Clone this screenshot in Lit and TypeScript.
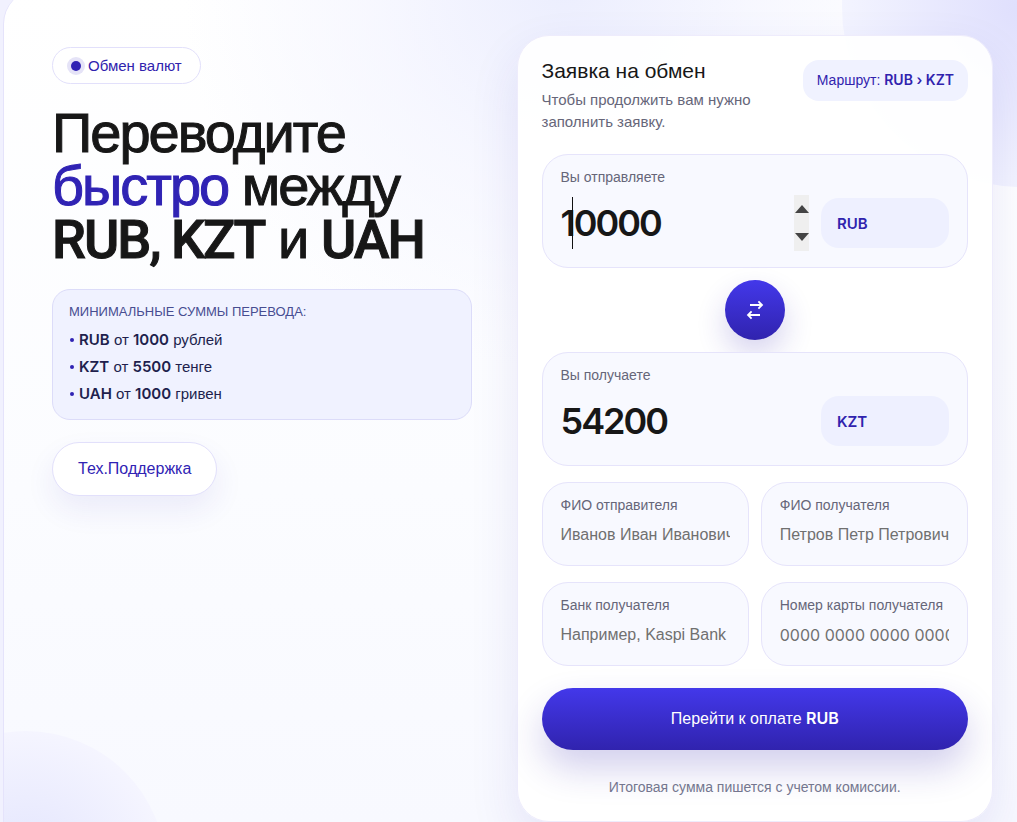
import { LitElement, html, css } from "lit";
import { customElement, state } from "lit/decorators.js";

@customElement("app-root")
export class AppRoot extends LitElement {
  @state() private amount = 10000;
  @state() private from = "RUB";
  @state() private to = "KZT";

  static styles = css`
    :host {
      display: block;
      font-family: "Liberation Sans", Arial, sans-serif;
      color: #171717;
      background: #f1f1fe;
      min-height: 100vh;
      overflow: hidden;
    }
    * { box-sizing: border-box; }
    h1, h2, p, ul { margin: 0; padding: 0; }
    .latin { font-family: Inter, "Liberation Sans", sans-serif; font-weight: 600; line-height: 1; }
    .hero {
      position: relative;
      display: grid;
      grid-template-columns: minmax(0, 1fr) minmax(0, 1fr);
      min-height: calc(100vh + 10px);
      margin: -10px 0 0 3px;
      border-left: 1px solid #e5e3fb;
      border-radius: 34px 0 0 0;
      overflow: hidden;
      background:
        radial-gradient(circle at 560px 0, #eceefe 0, rgba(242, 243, 255, 0.6) 190px, rgba(255, 255, 255, 0) 380px),
        linear-gradient(180deg, #ffffff 0%, #fbfcff 60%, #f8f9ff 100%);
    }
    .orb { position: absolute; border-radius: 50%; }
    .orb.top { width: 360px; height: 360px; left: 838px; top: -163px; background: radial-gradient(circle, #dfdffd 0, #f3f4ff 180px); }
    .orb.bottom { width: 280px; height: 280px; left: -118px; top: 741px; background: radial-gradient(circle, #e2e4fd 0, #f5f5ff 140px); }
    .intro {
      position: relative;
      display: flex;
      flex-direction: column;
      align-items: flex-start;
      padding: 57px 39px 48px 48px;
    }
    .badge {
      display: flex;
      align-items: center;
      gap: 7px;
      height: 37px;
      padding: 0 18px;
      border: 1px solid #e2e0fb;
      border-radius: 19px;
      background: #fff;
      color: #3023ae;
      font-size: 15px;
    }
    .dot { width: 10px; height: 10px; border-radius: 50%; background: #3023b4; box-shadow: 0 0 0 4px #e5e3f7; }
    h1 {
      margin-top: 22px;
      font-size: 56px;
      line-height: 53px;
      font-weight: 400;
      letter-spacing: -2px;
      -webkit-text-stroke: 1px currentColor;
      white-space: nowrap;
    }
    h1 .latin { font-family: Roboto, sans-serif; font-size: 54px; font-weight: 500; line-height: 1; }
    .accent { color: #3023b4; }
    .limits {
      align-self: stretch;
      margin-top: 22px;
      padding: 13px 16px 12px;
      border: 1px solid #dcdcf9;
      border-radius: 18px;
      background: #f0f2ff;
    }
    .limits h2 { font-size: 13px; line-height: 18px; font-weight: 400; color: #474d91; }
    .limits ul { list-style: none; margin-top: 5px; }
    .limits li { display: flex; align-items: center; gap: 5px; font-size: 15px; line-height: 27px; color: #211f4d; white-space: pre; }
    .limits li::before { content: ""; width: 4px; height: 4px; margin-left: 1px; border-radius: 50%; background: #3023b4; }
    .support {
      display: flex;
      align-items: center;
      height: 54px;
      margin-top: 22px;
      padding: 0 25px;
      border: 1px solid #e2e0fb;
      border-radius: 27px;
      background: #fff;
      color: #3023b4;
      font-size: 16px;
      text-decoration: none;
      box-shadow: 0 14px 30px rgba(48, 35, 174, 0.08);
    }
    .side { position: relative; padding: 45px 24px 0 6px; }
    .card {
      padding: 24px;
      border: 1px solid #eeecfc;
      border-radius: 32px;
      background: rgba(255, 255, 255, 0.92);
      box-shadow: 0 20px 50px rgba(48, 35, 174, 0.1);
    }
    .head { display: flex; justify-content: space-between; align-items: flex-start; gap: 24px; }
    .head h2 { font-size: 21px; line-height: 22px; font-weight: 400; }
    .head p { margin-top: 7px; font-size: 15px; line-height: 22px; color: #666679; }
    .route { flex: none; padding: 0 14px; border-radius: 16px; background: #f0f2ff; color: #3023ae; font-size: 14px; line-height: 41px; }
    .field { display: block; border: 1px solid #e6e4fb; border-radius: 26px; background: #f8f9ff; padding: 13px 18px; }
    .field label { display: block; font-size: 14px; line-height: 18px; color: #666679; }
    .money { height: 114px; }
    .first { margin-top: 21px; }
    .row { position: relative; display: flex; align-items: center; gap: 12px; margin-top: 9px; }
    input, select, button { font: inherit; border: 0; outline: 0; background: none; margin: 0; }
    .amount {
      flex: 1;
      min-width: 0;
      height: 56px;
      padding: 0;
      font-family: Inter, sans-serif;
      font-size: 36px;
      font-weight: 600;
      letter-spacing: -2px;
      color: #171717;
      appearance: textfield;
    }
    .amount::-webkit-inner-spin-button { display: none; }
    .stepper { display: grid; width: 15px; height: 56px; background: #efefef; }
    .stepper button { display: grid; place-items: center; padding: 0; }
    .caret { position: absolute; left: 11px; top: 2px; width: 1px; height: 52px; background: #111; }
    .code {
      appearance: none;
      width: 128px;
      height: 50px;
      padding: 0 16px;
      border-radius: 18px;
      background: #eef0ff;
      color: #3023ae;
      font-family: Inter, sans-serif;
      font-size: 15px;
      font-weight: 600;
    }
    .swap {
      display: grid;
      place-items: center;
      width: 60px;
      height: 60px;
      margin: 12px auto;
      padding: 0;
      border-radius: 50%;
      background: linear-gradient(180deg, #4338ea, #3023ae);
      box-shadow: 0 14px 30px rgba(48, 35, 174, 0.2);
    }
    .details { display: grid; grid-template-columns: 1fr 1fr; gap: 16px 12px; margin-top: 16px; }
    .text { height: 84px; }
    .text input { display: block; width: 100%; height: 24px; margin-top: 9px; padding: 0; font-size: 16px; color: #171717; }
    .text input::placeholder { color: #707070; opacity: 1; }
    .text .round { font-family: Inter, sans-serif; }
    .pay {
      display: block;
      width: 100%;
      height: 62px;
      margin-top: 22px;
      border-radius: 31px;
      background: linear-gradient(180deg, #4338ea, #3023ae);
      box-shadow: 0 18px 36px rgba(48, 35, 174, 0.22);
      color: #fff;
      font-size: 16px;
    }
    .note { margin-top: 27px; font-size: 14px; line-height: 20px; text-align: center; color: #74768f; }
  `;

  private swap() {
    [this.from, this.to] = [this.to, this.from];
  }

  private step(by: number) {
    this.amount = Math.max(0, this.amount + by);
  }

  private limit(code: string, sum: string, unit: string) {
    return html`<li><span><span class="latin">${code}</span> от <span class="latin">${sum}</span> ${unit}</span></li>`;
  }

  private code(label: string, value: string) {
    return html`<select class="code" aria-label=${label}>
      ${["RUB", "KZT", "UAH"].map((c) => html`<option ?selected=${c === value}>${c}</option>`)}
    </select>`;
  }

  private text(id: string, label: string, hint: string, cls = "") {
    return html`<div class="field text">
      <label for=${id}>${label}</label>
      <input id=${id} class=${cls} placeholder=${hint} />
    </div>`;
  }

  render() {
    return html`
      <main class="hero">
        <div class="orb top"></div>
        <div class="orb bottom"></div>
        <section class="intro">
          <div class="badge"><span class="dot"></span>Обмен валют</div>
          <h1>
            Переводите<br /><span class="accent">быстро</span> между<br />
            <span class="latin">RUB, KZT</span> и <span class="latin">UAH</span>
          </h1>
          <div class="limits">
            <h2>МИНИМАЛЬНЫЕ СУММЫ ПЕРЕВОДА:</h2>
            <ul>
              ${this.limit("RUB", "1000", "рублей")}
              ${this.limit("KZT", "5500", "тенге")}
              ${this.limit("UAH", "1000", "гривен")}
            </ul>
          </div>
          <a class="support" href="#support">Тех.Поддержка</a>
        </section>
        <section class="side">
          <form class="card" @submit=${(e: Event) => e.preventDefault()}>
            <header class="head">
              <div>
                <h2>Заявка на обмен</h2>
                <p>Чтобы продолжить вам нужно заполнить заявку.</p>
              </div>
              <div class="route">Маршрут: <span class="latin">${this.from} › ${this.to}</span></div>
            </header>
            <div class="field money first">
              <label for="send">Вы отправляете</label>
              <div class="row">
                <input
                  id="send"
                  class="amount"
                  type="number"
                  .value=${String(this.amount)}
                  @input=${(e: Event) => (this.amount = Number((e.target as HTMLInputElement).value))}
                />
                <span class="caret"></span>
                <div class="stepper">
                  <button type="button" aria-label="Больше" @click=${() => this.step(1)}>
                    <svg width="14" height="8" viewBox="0 0 14 8"><path d="M7 0L14 8H0Z" fill="#444" /></svg>
                  </button>
                  <button type="button" aria-label="Меньше" @click=${() => this.step(-1)}>
                    <svg width="14" height="8" viewBox="0 0 14 8"><path d="M7 8L14 0H0Z" fill="#444" /></svg>
                  </button>
                </div>
                ${this.code("Валюта отправления", this.from)}
              </div>
            </div>
            <button class="swap" type="button" aria-label="Поменять валюты" @click=${this.swap}>
              <svg width="20" height="22" viewBox="0 0 20 22" fill="none" stroke="#fff" stroke-width="1.8">
                <path d="M5 6H17M13.4 2.4L17 6L13.4 9.6M15 16H3M6.6 12.4L3 16L6.6 19.6" />
              </svg>
            </button>
            <div class="field money">
              <label for="get">Вы получаете</label>
              <div class="row">
                <input id="get" class="amount" readonly .value=${"54200"} />
                ${this.code("Валюта получения", this.to)}
              </div>
            </div>
            <div class="details">
              ${this.text("sender", "ФИО отправителя", "Иванов Иван Иванович")}
              ${this.text("receiver", "ФИО получателя", "Петров Петр Петрович")}
              ${this.text("bank", "Банк получателя", "Например, Kaspi Bank")}
              ${this.text("cardno", "Номер карты получателя", "0000 0000 0000 0000", "round")}
            </div>
            <button class="pay">Перейти к оплате <span class="latin">${this.from}</span></button>
            <p class="note">Итоговая сумма пишется с учетом комиссии.</p>
          </form>
        </section>
      </main>
    `;
  }
}
